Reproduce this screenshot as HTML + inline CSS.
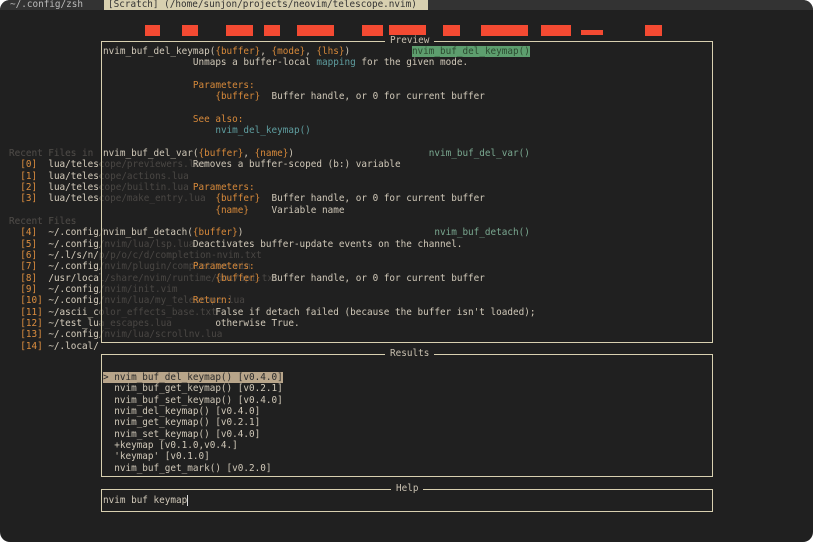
<!DOCTYPE html>
<html><head><style>
*{margin:0;padding:0;box-sizing:border-box}
body{width:813px;height:542px;background:#fff;overflow:hidden;font-family:"DejaVu Sans Mono","Liberation Mono",monospace;font-size:9.33px;}
#win{position:absolute;left:0;top:0;width:813px;height:542px;background:#202020;border-radius:10px;overflow:hidden}
#bar{position:absolute;left:0;top:0;width:813px;height:10px;background:#333}
.t{position:absolute;top:0;height:10px;line-height:9px;white-space:pre;color:#bbb}
pre{position:absolute;font:inherit;line-height:11.33px;white-space:pre;color:#d0c8b8}
.o{color:#d7893a}.d{color:#4a4744}.c{color:#5f9ea0}.g{color:#7aa890}
.box{position:absolute;border:1px solid #d8d0b0}
.ti{position:absolute;top:-7px;background:#202020;color:#c8c0b0;padding:0 5px;line-height:12px}
.r{position:absolute;background:#f44a32;height:11px;top:25px}
</style></head><body><div id="win">
<div id="bar"></div>
<div class="t" style="left:10px;">~/.config/zsh</div>
<div class="t" style="left:104px;background:#d8d0b0;color:#333;padding:0 4px;width:324px">[Scratch] (/home/sunjon/projects/neovim/telescope.nvim)</div>
<div class="r" style="left:145px;width:15px"></div>
<div class="r" style="left:182px;width:16px"></div>
<div class="r" style="left:226px;width:27px"></div>
<div class="r" style="left:264px;width:16px"></div>
<div class="r" style="left:297px;width:37px"></div>
<div class="r" style="left:362px;width:21px"></div>
<div class="r" style="left:389px;width:37px"></div>
<div class="r" style="left:443px;width:17px"></div>
<div class="r" style="left:481px;width:47px"></div>
<div class="r" style="left:541px;width:30px"></div>
<div class="r" style="left:581px;width:22px;top:30px;height:5px"></div>
<div class="r" style="left:645px;width:17px"></div>

<pre class="d" style="left:9px;top:148px">Recent Files in
  [0]  lua/telescope/previewers.lua
  [1]  lua/telescope/actions.lua
  [2]  lua/telescope/builtin.lua
  [3]  lua/telescope/make_entry.lua

Recent Files
  [4]  ~/.config/
  [5]  ~/.config/nvim/lua/lsp.lua
  [6]  ~/.l/s/n/p/p/o/c/d/completion-nvim.txt
  [7]  ~/.config/nvim/plugin/completion.vim
  [8]  /usr/local/share/nvim/runtime/doc/api.txt
  [9]  ~/.config/nvim/init.vim
  [10] ~/.config/nvim/lua/my_telescope.lua
  [11] ~/ascii_color_effects_base.txt
  [12] ~/test_lua_escapes.lua
  [13] ~/.config/nvim/lua/scrollnv.lua
  [14] ~/.local/</pre>
<div style="position:absolute;left:0;top:140px;width:100px;height:220px;overflow:hidden">
<pre style="left:9px;top:8px"><span class="d">Recent Files in</span>
  <span class="o">[0]</span>  lua/telescope
  <span class="o">[1]</span>  lua/telescope
  <span class="o">[2]</span>  lua/telescope
  <span class="o">[3]</span>  lua/telescope

<span class="d">Recent Files</span>
  <span class="o">[4]</span>  ~/.config/
  <span class="o">[5]</span>  ~/.config/
  <span class="o">[6]</span>  ~/.l/s/n/
  <span class="o">[7]</span>  ~/.config/
  <span class="o">[8]</span>  /usr/local/
  <span class="o">[9]</span>  ~/.config/
  <span class="o">[10]</span> ~/.config/
  <span class="o">[11]</span> ~/ascii_co
  <span class="o">[12]</span> ~/test_lua
  <span class="o">[13]</span> ~/.config/
  <span class="o">[14]</span> ~/.local/</pre></div>

<div class="box" style="left:101px;top:41px;width:612px;height:302px"><div class="ti" style="left:283px">Preview</div></div>
<pre style="left:103px;top:46px">nvim_buf_del_keymap(<span class="o">{buffer}</span>, <span class="o">{mode}</span>, <span class="o">{lhs}</span>)           <span style="background:#5d9e6e;color:#2c4a30">nvim_buf_del_keymap()</span>
                Unmaps a buffer-local <span class="c">mapping</span> for the given mode.

                <span class="o">Parameters:</span>
                    <span class="o">{buffer}</span>  Buffer handle, or 0 for current buffer

                <span class="o">See also:</span>
                    <span class="c">nvim_del_keymap()</span>

nvim_buf_del_var(<span class="o">{buffer}</span>, <span class="o">{name}</span>)                        <span class="g">nvim_buf_del_var()</span>
                Removes a buffer-scoped (b:) variable

                <span class="o">Parameters:</span>
                    <span class="o">{buffer}</span>  Buffer handle, or 0 for current buffer
                    <span class="o">{name}</span>    Variable name

nvim_buf_detach(<span class="o">{buffer}</span>)                                  <span class="g">nvim_buf_detach()</span>
                Deactivates buffer-update events on the channel.

                <span class="o">Parameters:</span>
                    <span class="o">{buffer}</span>  Buffer handle, or 0 for current buffer

                <span class="o">Return:</span>
                    False if detach failed (because the buffer isn't loaded);
                    otherwise True.</pre>

<div class="box" style="left:101px;top:354px;width:612px;height:123px"><div class="ti" style="left:283px">Results</div></div>
<pre style="left:103px;top:372px"><span style="background:#b8a58a;color:#2a2a2a">&gt; nvim_buf_del_keymap() [v0.4.0]</span>
  nvim_buf_get_keymap() [v0.2.1]
  nvim_buf_set_keymap() [v0.4.0]
  nvim_del_keymap() [v0.4.0]
  nvim_get_keymap() [v0.2.1]
  nvim_set_keymap() [v0.4.0]
  +keymap [v0.1.0,v0.4.]
  'keymap' [v0.1.0]
  nvim_buf_get_mark() [v0.2.0]</pre>

<div class="box" style="left:101px;top:489px;width:612px;height:23px"><div class="ti" style="left:289px">Help</div></div>
<pre style="left:103px;top:495px">nvim buf keymap<span style="border-left:1px solid #ddd"> </span></pre>
</div></body></html>
